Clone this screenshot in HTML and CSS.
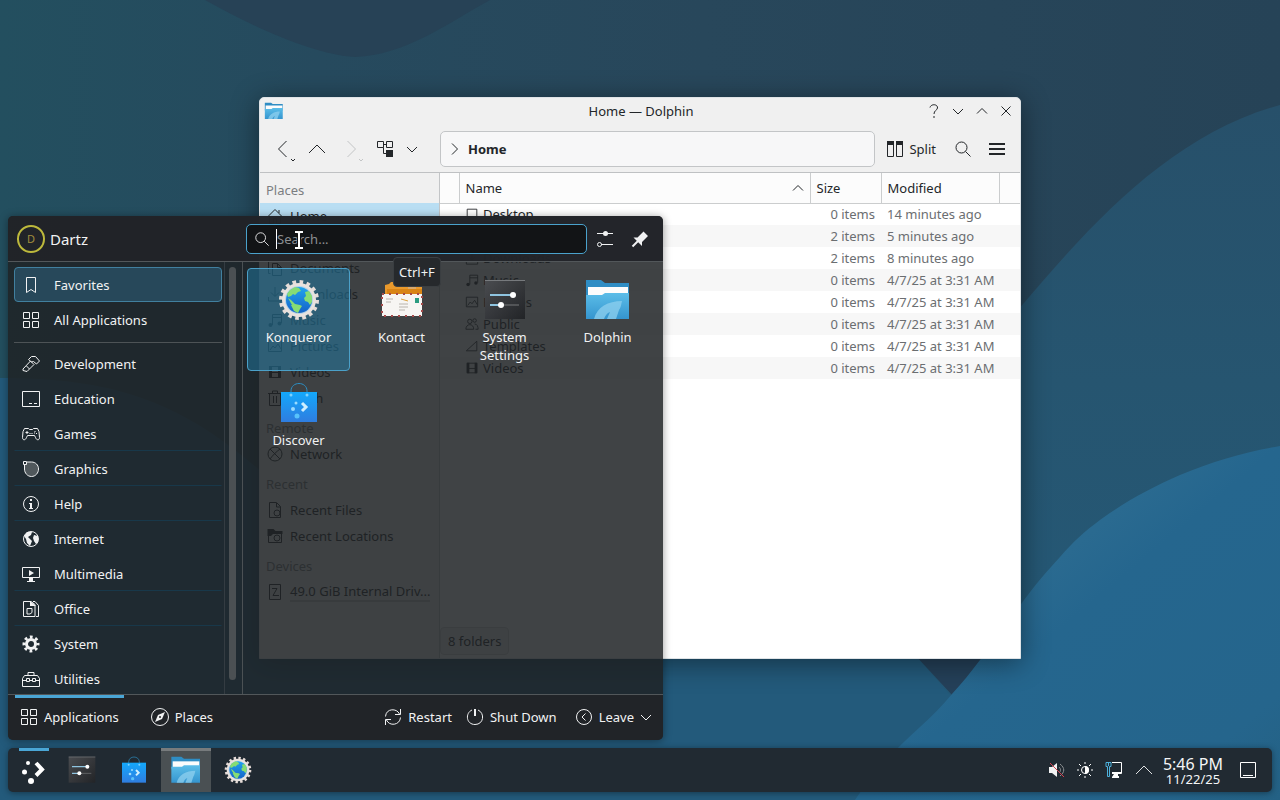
FILE: index.html
```html
<!DOCTYPE html>
<html lang="en">
<head>
<meta charset="utf-8">
<title>Desktop</title>
<link rel="stylesheet" href="styles.css">
</head>
<body>
<svg class="defs" width="0" height="0" aria-hidden="true">
  <defs>
    <linearGradient id="gFolder" x1="0" y1="0" x2="0" y2="1"><stop offset="0" stop-color="#5bbde8"/><stop offset="1" stop-color="#3595cf"/></linearGradient>
    <linearGradient id="gBag" x1="0" y1="0" x2="0" y2="1"><stop offset="0" stop-color="#13a8fb"/><stop offset="1" stop-color="#2f7de0"/></linearGradient>
    <linearGradient id="gDark" x1="0" y1="0" x2="1" y2="1"><stop offset="0" stop-color="#4a4c50"/><stop offset="1" stop-color="#222427"/></linearGradient>
    <linearGradient id="gGlobe" x1="0" y1="0" x2="0" y2="1"><stop offset="0" stop-color="#21a3ee"/><stop offset="1" stop-color="#1563c8"/></linearGradient>
  </defs>
  <symbol id="konqueror" viewBox="0 0 48 48">
    <circle cx="24" cy="24" r="18" fill="none" stroke="#e6dcd8" stroke-width="4" stroke-dasharray="3.6 3.47"/>
    <circle cx="24" cy="24" r="17" fill="#e9e2de"/>
    <circle cx="24" cy="24" r="14" fill="#b4d3e8"/>
    <circle cx="24" cy="24" r="13" fill="url(#gGlobe)"/>
    <path d="M12 18l3-4 5-3 4 1 2 3-3 1-3 3-2-1-2 2-3 1zM30 16l4-1 3 5v6l-2 3-2-3-3-1-1-3 2-2zM16 29l4-1 5 1 2 1-2 3-2 4-4-2zM13 22l3 2 4 4-3 1z" fill="#86dc74"/>
  </symbol>
  <symbol id="kontact" viewBox="0 0 48 48">
    <path d="M7 21V9l4-1 2-2h5l2 2h24v13z" fill="#e9992c"/>
    <path d="M30 8h8v9h-8z" fill="#d9a86b"/>
    <path d="M9 13h35v8H9z" fill="#d98415"/>
    <path d="M4 18h40v22H4z" fill="#f7f5f3"/>
    <path d="M4 18h40v22H4z" fill="none" stroke="#a54a4a" stroke-width="2" stroke-dasharray="2 5"/>
    <path d="M37 22h4v5h-4z" fill="#2b9c81"/>
    <path d="M8 23h7M8 26h5M21 28h9M21 31h9M21 34h6" stroke="#b9b4ae"/>
    <path d="M23 23l7 2" stroke="#dda23f"/>
  </symbol>
  <symbol id="settings" viewBox="0 0 48 48">
    <path d="M4 4h40v39H4z" fill="url(#gDark)"/>
    <path d="M4 4h40v1H4z" fill="#777a7d"/>
    <path d="M9 19h24M9 29h11" stroke="#8fc4e0" stroke-width="2"/>
    <path d="M22 29h16" stroke="#77787a" stroke-width="1"/>
    <circle cx="32" cy="19" r="3" fill="#fff"/><circle cx="20" cy="29" r="3" fill="#fff"/>
  </symbol>
  <symbol id="dolphin" viewBox="0 0 48 48">
    <path d="M2 4h15l4 3h24v16H2z" fill="#2f8dc4"/>
    <path d="M4 11h40v12H4z" fill="#fcfcfc"/>
    <path d="M2 19h16l3-2h24v26H2z" fill="url(#gFolder)"/>
    <path d="M10 43c3-12 14-18 28-18-1 4-1 6-3 9l-3 9h-9l3-7c-3 1-5 4-6 7z" fill="#8fd0ef" opacity=".75"/>
  </symbol>
  <symbol id="discover" viewBox="0 0 48 48">
    <path d="M16 17v-5c0-10 16-10 16 0v5" fill="none" stroke="#2c8fc4" stroke-width="1"/>
    <path d="M6 13h36v30H6z" fill="url(#gBag)"/>
    <circle cx="16" cy="16" r="1.500" fill="#7fd0fb"/><circle cx="32" cy="16" r="1.500" fill="#7fd0fb"/>
    <path d="M27 24l4 4-4 4" fill="none" stroke="#cfefff" stroke-width="3"/>
    <circle cx="21" cy="24" r="1.500" fill="#9bdcff"/><circle cx="18" cy="30" r="2" fill="#9bdcff"/><circle cx="22" cy="37" r="2.500" fill="#58c3fb"/>
  </symbol>
  <symbol id="grid" viewBox="0 0 18 18"><path d="M1.500 1.500h6v6h-6zM10.500 1.500h6v6h-6zM1.500 10.500h6v6h-6zM10.500 10.500h6v6h-6z" fill="none" stroke="currentColor"/></symbol>
  <symbol id="search" viewBox="0 0 18 18"><circle cx="7.500" cy="7.500" r="5.500" fill="none" stroke="currentColor"/><path d="M11.500 11.500l5 5" stroke="currentColor"/></symbol>
  <symbol id="down" viewBox="0 0 12 12"><path d="M1 4l5 5 5-5" fill="none" stroke="currentColor"/></symbol>
  <symbol id="up" viewBox="0 0 12 12"><path d="M1 8.500L6 3.500l5 5" fill="none" stroke="currentColor"/></symbol>
  <symbol id="house" viewBox="0 0 16 16"><path d="M.5 9L8 1.500 15.500 9M2.500 8v7.500h4v-5h3v5h4V8M12 5V2" fill="none" stroke="currentColor"/></symbol>
  <symbol id="desk" viewBox="0 0 16 16"><path d="M2.500 2.500h11v11h-11zM2.500 11.500h11" fill="none" stroke="currentColor"/></symbol>
  <symbol id="doc" viewBox="0 0 16 16"><path d="M5.500 3.500h5l4 4v8h-9zM10.500 3.500v4h4M3.500 13.500h-2v-12h7" fill="none" stroke="currentColor"/></symbol>
  <symbol id="dl" viewBox="0 0 16 16"><path d="M8 1v9M4 6.500l4 4 4-4M1.500 11v4h13v-4" fill="none" stroke="currentColor"/></symbol>
  <symbol id="note" viewBox="0 0 16 16"><path d="M5.500 13V2.500h9V11M5.500 5.500h9" fill="none" stroke="currentColor"/><circle cx="3.500" cy="13" r="2" fill="currentColor"/><circle cx="12.500" cy="11.500" r="2" fill="currentColor"/></symbol>
  <symbol id="pic" viewBox="0 0 16 16"><path d="M1.500 2.500h13v11h-13zM3 12l3-4 2 2 3-4 3 5" fill="none" stroke="currentColor"/></symbol>
  <symbol id="people" viewBox="0 0 16 16"><path d="M1 14c0-7 9-7 9 0zM11 8c3 0 4 3 4 6h-3" fill="none" stroke="currentColor"/><circle cx="5.500" cy="5" r="2.500" fill="none" stroke="currentColor"/><circle cx="11" cy="4" r="2" fill="none" stroke="currentColor"/></symbol>
  <symbol id="tri" viewBox="0 0 16 16"><path d="M1.500 13.500l12-11v11z" fill="none" stroke="currentColor"/></symbol>
  <symbol id="film" viewBox="0 0 16 16"><path d="M2 2h3v12H2zM11 2h3v12h-3z" fill="currentColor"/><path d="M2.500 2.500h11v11h-11zM4.500 8.500h7" fill="none" stroke="currentColor"/></symbol>
  <symbol id="trash" viewBox="0 0 16 16"><path d="M1 3.500h14M2.500 4v11.500h11V4M6.500 6v7M9.500 6v7M5.500 3V1h5v2" fill="none" stroke="currentColor"/></symbol>
  <symbol id="net" viewBox="0 0 16 16"><circle cx="8" cy="8" r="7" fill="none" stroke="currentColor"/><path d="M3 3c3 3 7 7 10 10M13 3C9 6 6 9 3 13" fill="none" stroke="currentColor"/></symbol>
  <symbol id="recent" viewBox="0 0 16 16"><path d="M2.500 15.500V.5h7l4 4v11zM9.500 1v4h4" fill="none" stroke="currentColor"/><circle cx="10" cy="11" r="3" fill="none" stroke="currentColor"/></symbol>
  <symbol id="recdir" viewBox="0 0 16 16"><path d="M.5 1h6l2 2h7v3H6L4 8H.500z" fill="currentColor"/><path d="M1.500 3v11.500h13V4" fill="none" stroke="currentColor"/><circle cx="10" cy="10" r="3" fill="none" stroke="currentColor"/></symbol>
  <symbol id="drive" viewBox="0 0 16 16"><path d="M2.500.5h11v15h-11zM5 4.500h5L6 11.500h6" fill="none" stroke="currentColor"/></symbol>
</svg>

<main class="desktop">
  <svg class="wallpaper" viewBox="0 0 1280 800" preserveAspectRatio="none" aria-hidden="true">
    <defs>
      <linearGradient id="w0" x1="0" y1="0" x2="1" y2="0"><stop offset="0" stop-color="#234f5f"/><stop offset=".25" stop-color="#264a5e"/><stop offset=".55" stop-color="#28475b"/><stop offset="1" stop-color="#264357"/></linearGradient>
      <linearGradient id="w1" x1="0" y1="0" x2="0" y2="1"><stop offset="0" stop-color="#27506a"/><stop offset=".4" stop-color="#265570"/><stop offset="1" stop-color="#245a79"/></linearGradient>
      <linearGradient id="w2" x1="0" y1="0" x2="1" y2="1"><stop offset="0" stop-color="#2a6a90"/><stop offset=".4" stop-color="#2a6a90"/><stop offset=".5" stop-color="#25668e"/><stop offset=".85" stop-color="#25658c"/><stop offset="1" stop-color="#246184"/></linearGradient>
    </defs>
    <path d="M0 0h1280v800H0z" fill="url(#w0)"/>
    <path d="M205 0c50 28 110 55 150 57 50-2 90-32 135-57z" fill="#274256"/>
    <path d="M1280 105c-110 30-190 120-262 205L860 560l60 240h360z" fill="url(#w1)"/>
    <path d="M0 378c130 0 200 30 300 130s400 140 620 152l120 140H0z" fill="#235a7b"/>
    <path d="M915 655h90l-53 40z" fill="#25415a"/>
    <path d="M1280 446c-35 6-67 15-100 29-30 13-55 27-80 45-15 11-27 22-40 37-13 14-24 27-36 43-15 21-29 42-44 60-9 12-18 23-28 34-10 12-20 22-32 33-24 22-45 43-65 73h425z" fill="url(#w2)"/>
  </svg>

  <section class="window" aria-label="Home — Dolphin">
    <header class="titlebar">
      <svg class="i20"><use href="#dolphin"/></svg>
      <h1>Home — Dolphin</h1>
      <div class="winbtns">
        <button aria-label="Help"><svg class="i14" viewBox="0 0 14 14"><path d="M3 3.500C4-.5 11 0 10.500 4 10 6.500 7 6.500 7 10M7 12v2" fill="none" stroke="currentColor"/></svg></button>
        <button aria-label="Minimize"><svg class="i12"><use href="#down"/></svg></button>
        <button aria-label="Maximize"><svg class="i12"><use href="#up"/></svg></button>
        <button aria-label="Close"><svg class="i12" viewBox="0 0 12 12"><path d="M1.500 1.500l9 9M10.500 1.500l-9 9" stroke="currentColor"/></svg></button>
      </div>
    </header>
    <nav class="toolbar">
      <button aria-label="Back"><svg class="i24" viewBox="0 0 24 24"><path d="M15.500 4l-8 8 8 8" fill="none" stroke="currentColor"/><path d="M20 22l2 2 2-2" fill="none" stroke="currentColor"/></svg></button>
      <button aria-label="Up"><svg class="i24" viewBox="0 0 24 24"><path d="M4 16l8-8 8 8" fill="none" stroke="currentColor"/></svg></button>
      <button aria-label="Forward" disabled><svg class="i24" viewBox="0 0 24 24"><path d="M8.500 4l8 8-8 8" fill="none" stroke="currentColor"/><path d="M20 22l2 2 2-2" fill="none" stroke="currentColor"/></svg></button>
      <button aria-label="View mode"><svg class="i18" viewBox="0 0 18 18"><path d="M1.500 1.500h6v6h-6zM10.500 1.500h6v6h-6zM7 4.500h3M7.500 7.500v6h3" fill="none" stroke="currentColor"/><path d="M10 10h7v7h-7z" fill="currentColor"/></svg></button>
      <button class="narrow" aria-label="View options"><svg class="i12"><use href="#down"/></svg></button>
      <div class="location"><svg class="i14" viewBox="0 0 14 14"><path d="M4 1.500L9.500 7 4 12.500" fill="none" stroke="currentColor"/></svg><a href="#home">Home</a></div>
      <button class="split"><svg class="i18" viewBox="0 0 18 18"><path d="M1.500 1.500h6v15h-6zM10.500 1.500h6v15h-6z" fill="none" stroke="currentColor"/><path d="M1 1h7v4H1zM10 1h7v4h-7z" fill="currentColor"/></svg>Split</button>
      <button aria-label="Search"><svg class="i18"><use href="#search"/></svg></button>
      <button aria-label="Menu"><svg class="i18" viewBox="0 0 18 18"><path d="M1 4h16M1 9h16M1 14h16" stroke="currentColor" stroke-width="2"/></svg></button>
    </nav>
    <div class="content">
      <aside class="places">
        <h2>Places</h2>
        <ul>
          <li class="on"><svg class="i16"><use href="#house"/></svg>Home</li>
          <li><svg class="i16"><use href="#desk"/></svg>Desktop</li>
          <li><svg class="i16"><use href="#doc"/></svg>Documents</li>
          <li><svg class="i16"><use href="#dl"/></svg>Downloads</li>
          <li><svg class="i16"><use href="#note"/></svg>Music</li>
          <li><svg class="i16"><use href="#pic"/></svg>Pictures</li>
          <li><svg class="i16"><use href="#film"/></svg>Videos</li>
          <li><svg class="i16"><use href="#trash"/></svg>Trash</li>
        </ul>
        <h2>Remote</h2>
        <ul><li><svg class="i16"><use href="#net"/></svg>Network</li></ul>
        <h2>Recent</h2>
        <ul>
          <li><svg class="i16"><use href="#recent"/></svg>Recent Files</li>
          <li><svg class="i16"><use href="#recdir"/></svg>Recent Locations</li>
        </ul>
        <h2>Devices</h2>
        <ul><li><svg class="i16"><use href="#drive"/></svg><span class="drive">49.0 GiB Internal Driv...</span></li></ul>
      </aside>
      <div class="files">
        <table>
          <colgroup><col class="c0"><col><col class="c2"><col class="c3"><col class="c4"></colgroup>
          <thead><tr><th></th><th><span class="sort">Name<svg class="i12"><use href="#up"/></svg></span></th><th>Size</th><th>Modified</th><th></th></tr></thead>
          <tbody>
            <tr><td></td><td><span class="file"><svg class="i14"><use href="#desk"/></svg>Desktop</span></td><td>0 items</td><td>14 minutes ago</td><td></td></tr>
            <tr><td></td><td><span class="file"><svg class="i14"><use href="#doc"/></svg>Documents</span></td><td>2 items</td><td>5 minutes ago</td><td></td></tr>
            <tr><td></td><td><span class="file"><svg class="i14"><use href="#dl"/></svg>Downloads</span></td><td>2 items</td><td>8 minutes ago</td><td></td></tr>
            <tr><td></td><td><span class="file"><svg class="i14"><use href="#note"/></svg>Music</span></td><td>0 items</td><td>4/7/25 at 3:31 AM</td><td></td></tr>
            <tr><td></td><td><span class="file"><svg class="i14"><use href="#pic"/></svg>Pictures</span></td><td>0 items</td><td>4/7/25 at 3:31 AM</td><td></td></tr>
            <tr><td></td><td><span class="file"><svg class="i14"><use href="#people"/></svg>Public</span></td><td>0 items</td><td>4/7/25 at 3:31 AM</td><td></td></tr>
            <tr><td></td><td><span class="file"><svg class="i14"><use href="#tri"/></svg>Templates</span></td><td>0 items</td><td>4/7/25 at 3:31 AM</td><td></td></tr>
            <tr><td></td><td><span class="file"><svg class="i14"><use href="#film"/></svg>Videos</span></td><td>0 items</td><td>4/7/25 at 3:31 AM</td><td></td></tr>
          </tbody>
        </table>
        <p class="status">8 folders</p>
      </div>
    </div>
  </section>

  <section class="launcher" aria-label="Application launcher">
    <header class="lhead">
      <div class="user"><span class="avatar">D</span>Dartz</div>
      <div class="lsearch">
        <label class="field"><svg class="i16"><use href="#search"/></svg><input type="text" placeholder="Search..." aria-label="Search"></label>
        <button aria-label="Configure"><svg class="i18" viewBox="0 0 18 18"><path d="M1 3.500h16M5 14.500h12" stroke="currentColor"/><circle cx="9.500" cy="3.500" r="2.500" fill="currentColor"/><circle cx="3.500" cy="14.500" r="2" fill="none" stroke="currentColor"/></svg></button>
        <button aria-label="Keep open"><svg class="i18" viewBox="0 0 18 18"><path d="M12.500 1.500l4.500 4.500-6 6v4L2.500 7.500h4z" fill="currentColor"/><path d="M7 11l-5.500 5.500" stroke="currentColor" stroke-width="2"/></svg></button>
      </div>
    </header>
    <div class="lbody">
      <nav class="cats">
        <button class="on"><svg class="i18" viewBox="0 0 18 18"><path d="M4.500 1.500h9v15l-4.500-3-4.500 3z" fill="none" stroke="currentColor"/></svg>Favorites</button>
        <button><svg class="i18"><use href="#grid"/></svg>All Applications</button>
        <hr>
        <button><svg class="i18" viewBox="0 0 18 18"><path d="M6.500 4.500l3-3h4l4 4.500-3 3-3-2.500-2 .5zM8.500 6l3.500 3.500-7 7-4-1V14z" fill="none" stroke="currentColor"/><path d="M4.500 11l3 3" stroke="currentColor"/></svg>Development</button>
        <button><svg class="i18" viewBox="0 0 18 18"><path d="M.5 1.500h17v15H.500zM7 13.500h3M12 13.500h3M3 3v0" fill="none" stroke="currentColor"/></svg>Education</button>
        <button class="line"><svg class="i18" viewBox="0 0 18 18"><path d="M2.500 3.500h4l1 1h3l1-1h4l1.500 3 .5 6c0 3-3 3-4 0l-1-2h-7l-1 2c-1 3-4 3-4 0L1 6.500z" fill="none" stroke="currentColor"/><path d="M3.500 7.500h3M5 6v3M7.500 8.500h1M9.500 8.500h1M13 6v1M12 8h1M14 8.500h1" stroke="currentColor"/></svg>Games</button>
        <button class="line"><svg class="i18" viewBox="0 0 18 18"><path d="M2.500 5v4c0 4 3 7.500 7 7.500s7-3.500 7-7.500-3-7-7-7H5" fill="#50585c" stroke="currentColor"/><path d="M1.500 1.500h3v3h-3z" fill="none" stroke="currentColor"/></svg>Graphics</button>
        <button class="line"><svg class="i18" viewBox="0 0 18 18"><circle cx="9" cy="9" r="7.500" fill="none" stroke="currentColor"/><path d="M7 8h3v5h1v1H7v-1h1V9H7zM8 4h2v2H8z" fill="currentColor"/></svg>Help</button>
        <button><svg class="i18" viewBox="0 0 18 18"><circle cx="9" cy="9" r="7.500" fill="none" stroke="currentColor"/><path d="M2 6l3-4h5L9 5 6 7l2 2 2 2-2 5-3-3-1-4zM12 5l4 1v6l-2 2-2-3-1-3z" fill="currentColor"/></svg>Internet</button>
        <button class="line"><svg class="i18" viewBox="0 0 18 18"><path d="M.5 2.500h17v10H.500z" fill="none" stroke="currentColor"/><path d="M7 5l5 3-5 3zM7 13h4v3h2v1H5v-1h2z" fill="currentColor"/></svg>Multimedia</button>
        <button class="line"><svg class="i18" viewBox="0 0 18 18"><path d="M8 16.500H1.500v-15H9l4 3v12H8M5 8.500h5v4L8 14H5zM11 1.500h2l3.500 4v11H14" fill="none" stroke="currentColor"/><path d="M8 1l6 5H8z" fill="currentColor"/></svg>Office</button>
        <button><svg class="i18" viewBox="0 0 18 18"><circle cx="9" cy="9" r="4.500" fill="none" stroke="currentColor" stroke-width="3"/><circle cx="9" cy="9" r="7" fill="none" stroke="currentColor" stroke-width="3" stroke-dasharray="2.750 2.750" stroke-dashoffset="1.375"/></svg>System</button>
        <button><svg class="i18" viewBox="0 0 18 18"><path d="M6 5.500v-3h6v3M.5 8.500l2-3h13l2 3v8H.500zM1 10.500h16" fill="none" stroke="currentColor"/><path d="M4.500 8.500h3v3h-3zM10.500 8.500h3v3h-3z" fill="#232c33" stroke="currentColor"/></svg>Utilities</button>
      </nav>
      <div class="scroll"><span></span></div>
      <div class="apps">
        <a class="on" href="#konqueror"><svg class="i48"><use href="#konqueror"/></svg>Konqueror</a>
        <a href="#kontact"><svg class="i48"><use href="#kontact"/></svg>Kontact</a>
        <a href="#settings"><svg class="i48"><use href="#settings"/></svg>System Settings</a>
        <a href="#dolphin"><svg class="i48"><use href="#dolphin"/></svg>Dolphin</a>
        <a href="#discover"><svg class="i48"><use href="#discover"/></svg>Discover</a>
      </div>
    </div>
    <footer class="lfoot">
      <button class="tab on"><svg class="i18"><use href="#grid"/></svg>Applications</button>
      <button class="tab"><svg class="i18" viewBox="0 0 18 18"><circle cx="9" cy="9" r="8.500" fill="none" stroke="currentColor"/><path d="M14 4l-3 7-7 3 3-7z" fill="currentColor"/><circle cx="9" cy="9" r="1" fill="#232629"/></svg>Places</button>
      <span class="space"></span>
      <button><svg class="i18" viewBox="0 0 18 18"><path d="M1.500 8.500C2 0 13 0 15.500 6M16.500 1v5.500H11M16.500 9.500c-.5 8-11.500 9-14 2.500M1.500 17v-5.500H7" fill="none" stroke="currentColor"/></svg>Restart</button>
      <button><svg class="i18" viewBox="0 0 18 18"><path d="M6 2C-1 5 0 16.500 9 16.500S19 5 12 2" fill="none" stroke="currentColor"/><path d="M9 1v7" stroke="currentColor" stroke-width="2"/></svg>Shut Down</button>
      <button class="leave"><svg class="i18" viewBox="0 0 18 18"><circle cx="9" cy="9" r="7.500" fill="none" stroke="currentColor"/><path d="M10.500 5.500L7 9l3.500 3.500" fill="none" stroke="currentColor"/></svg>Leave<svg class="i12"><use href="#down"/></svg></button>
    </footer>
    <div class="tooltip" role="tooltip">Ctrl+F</div>
    <svg class="pointer" viewBox="0 0 10 20" aria-hidden="true"><path d="M1 2h3l1 1 1-1h3M5 3v14M1 18h3l1-1 1 1h3" fill="none" stroke="#111" stroke-width="4"/><path d="M1 2h3l1 1 1-1h3M5 3v14M1 18h3l1-1 1 1h3" fill="none" stroke="#fff" stroke-width="2"/></svg>
  </section>

  <footer class="panel">
    <button class="start" aria-label="Launcher"><svg class="i28" viewBox="0 0 28 28"><path d="M17 7l6 6.500-6 6" fill="none" stroke="#fff" stroke-width="4"/><circle cx="9" cy="7" r="2" fill="#fff"/><circle cx="5.500" cy="16" r="2.500" fill="#fff"/><circle cx="12" cy="25" r="3" fill="#fff"/></svg></button>
    <button aria-label="System Settings"><svg class="i32"><use href="#settings"/></svg></button>
    <button aria-label="Discover"><svg class="i32"><use href="#discover"/></svg></button>
    <button class="active" aria-label="Dolphin"><svg class="i32"><use href="#dolphin"/></svg></button>
    <button aria-label="Konqueror"><svg class="i32"><use href="#konqueror"/></svg></button>
    <span class="space"></span>
    <div class="tray">
      <svg class="i16" viewBox="0 0 16 16"><path d="M0 5h3l5-4v14l-5-4H0z" fill="#f2f2f2"/><path d="M10 5c2 2 2 4 0 6M11 2c5 4 5 8 0 12" fill="none" stroke="#8b8f92"/><path d="M1 1l14 14" stroke="#d6404e"/></svg>
      <svg class="i16" viewBox="0 0 16 16"><circle cx="8" cy="8" r="3.500" fill="none" stroke="#fff"/><path d="M8 4a4 4 0 0 1 0 8z" fill="#fff"/><path d="M8 0v2M8 14v2M0 8h2M14 8h2M2 2l2 2M12 12l2 2M14 2l-2 2M4 12l-2 2" stroke="#fff"/></svg>
      <svg class="i18" viewBox="0 0 18 18"><path d="M7 1.500h9.500v11H7" fill="none" stroke="#fff"/><path d="M7 11h9v2h-3v2h1v2H7v-1l2-3H7z" fill="#fff"/><path d="M1 1.500h5v4H4.500v10h-2v-10H1zM3.500 1v4" fill="none" stroke="#4db1dc"/></svg>
      <svg class="i18" viewBox="0 0 18 18"><path d="M1 13l8-8 8 8" fill="none" stroke="#dfe1e2"/></svg>
    </div>
    <div class="clock"><time class="time">5:46 PM</time><time class="date">11/22/25</time></div>
    <button class="peek" aria-label="Show desktop"><svg class="i18" viewBox="0 0 18 18"><path d="M1.500 1.500h15v15h-15zM4 14.500h10" fill="none" stroke="#fff"/></svg></button>
  </footer>
</main>
</body>
</html>
```
FILE: styles.css
```css
* { box-sizing: border-box; }
body { margin: 0; font: 13px/18px "Noto Sans", sans-serif; color: #232629; }
h1, h2, p, ul { margin: 0; padding: 0; font-size: 13px; font-weight: 400; list-style: none; }
button { font: inherit; color: inherit; background: none; border: 0; padding: 0; display: flex; align-items: center; justify-content: center; }
a { color: inherit; text-decoration: none; }
svg { flex: none; display: block; }
.defs { position: absolute; }
.i12 { width: 12px; height: 12px; }
.i14 { width: 14px; height: 14px; }
.i16 { width: 16px; height: 16px; }
.i18 { width: 18px; height: 18px; }
.i20 { width: 20px; height: 20px; }
.i24 { width: 24px; height: 24px; overflow: visible; }
.i28 { width: 28px; height: 28px; }
.i32 { width: 32px; height: 32px; }
.i48 { width: 48px; height: 48px; }
.space { flex: 1; }

.desktop { position: relative; height: 100vh; overflow: hidden; display: flex; flex-direction: column; justify-content: flex-end; padding: 8px; background: #264a5e; }
.wallpaper { position: absolute; inset: 0; width: 100%; height: 100%; }

/* File manager window */
.window { position: absolute; inset: 97px 259px 141px; display: flex; flex-direction: column; background: #f0f0f0; border: 1px solid #dfe3e6; border-radius: 5px 5px 0 0; box-shadow: 0 4px 28px rgba(0, 0, 0, .45); overflow: hidden; }
.titlebar { display: grid; grid-template-columns: 1fr auto 1fr; align-items: center; height: 28px; padding: 0 2px 2px 4px; }
.winbtns { display: flex; justify-content: flex-end; }
.winbtns button { width: 24px; height: 24px; }
.toolbar { display: flex; align-items: center; height: 47px; padding: 0 6px; border-bottom: 1px solid #bfc1c3; }
.toolbar button { width: 34px; height: 34px; }
.toolbar button:disabled { color: #c3c5c6; }
.toolbar .narrow { width: 20px; }
.toolbar .split { width: auto; padding: 0 6px; gap: 5px; margin: 0 4px 0 5px; }
.location { flex: 1; display: flex; align-items: center; gap: 6px; height: 36px; margin-left: 18px; padding: 0 7px; background: #f7f7f8; border: 1px solid #c3c5c7; border-radius: 5px; font-weight: 700; }
.content { flex: 1; display: flex; min-height: 0; }
.places { width: 180px; border-right: 1px solid #c3c5c7; }
.places h2 { height: 30px; padding: 8px 6px 0; color: #7b7e81; }
.places li { display: flex; align-items: center; gap: 7px; height: 26px; padding: 0 7px; white-space: nowrap; }
.places .on { background: #b9def3; }
.drive { border-bottom: 2px solid #c5c8ca; }
.files { flex: 1; display: flex; flex-direction: column; justify-content: space-between; background: #fff; min-width: 0; }
table { width: 100%; table-layout: fixed; border-collapse: collapse; }
.c0 { width: 19px; }
.c2 { width: 71px; }
.c3 { width: 118px; }
.c4 { width: 21px; }
th { height: 30px; padding: 0 6px; text-align: left; font-weight: 400; border-right: 1px solid #cbcdce; border-bottom: 1px solid #cbcdce; background: #fcfcfc; }
th:last-child { border-right: 0; }
.sort { display: flex; align-items: center; justify-content: space-between; }
td { height: 22px; padding: 0 6px; color: #6b6e71; white-space: nowrap; }
td:nth-child(3) { text-align: right; }
tbody tr:nth-child(even) { background: #f7f7f7; }
.file { display: flex; align-items: center; gap: 4px; color: #232629; }
.status { align-self: flex-start; margin-bottom: 3px; padding: 4px 7px; background: #eff0f1; border: 1px solid #d5d7d8; border-radius: 4px; }

/* Launcher popup */
.launcher { position: absolute; left: 8px; bottom: 60px; width: 655px; color: #f1f2f3; border-radius: 5px; box-shadow: 0 1px 8px rgba(0, 0, 0, .4); overflow: hidden; background: rgba(31, 34, 37, .85); }
.lhead { display: flex; align-items: center; height: 46px; background: rgba(33, 36, 40, .93); border-bottom: 1px solid #52575a; }
.user { width: 238px; display: flex; align-items: center; gap: 5px; padding-left: 9px; font-size: 15px; }
.avatar { width: 28px; height: 28px; border: 2px solid #bdb93c; border-radius: 50%; display: flex; align-items: center; justify-content: center; color: #a08d3d; font-size: 11px; }
.lsearch { flex: 1; display: flex; align-items: center; padding-right: 6px; }
.lsearch button { width: 35px; height: 32px; }
.field { flex: 1; display: flex; align-items: center; gap: 6px; height: 30px; padding: 0 7px; background: #121416; border: 1px solid #4aa2cc; border-radius: 5px; }
.field input { flex: 1; min-width: 0; height: 20px; font: inherit; color: #fff; background: none; border: 0; border-left: 1px solid #fff; padding: 0; outline: 0; }
.field input::placeholder { color: #8c8f92; opacity: 1; }
.lbody { display: flex; height: 432px; overflow: hidden; }
.cats { width: 217px; padding: 5px 2px 0 6px; border-right: 1px solid #343c42; }
.cats button { width: 100%; height: 35px; padding-left: 7px; gap: 14px; justify-content: flex-start; border: 1px solid transparent; }
.cats .line { border-bottom-color: #18384a; }
.cats .on { background: #27485a; border-color: #41809f; border-radius: 4px; }
.cats hr { height: 1px; margin: 5px 0 3px; border: 0; background: #4d5356; }
.scroll { width: 18px; padding: 5px 6px 14px 4px; border-right: 1px solid #4b5154; }
.scroll span { display: block; width: 7px; height: 100%; border-radius: 4px; background: #4b5053; }
.apps { flex: 1; display: grid; grid-template-columns: repeat(4, 103px); grid-auto-rows: 103px; padding: 6px 4px 0; }
.apps a { display: flex; flex-direction: column; align-items: center; gap: 4px; padding: 7px 20px 0; text-align: center; border: 1px solid transparent; }
.apps .on { background: rgba(32, 125, 170, .5); border-color: #4ba0c8; border-radius: 4px; }
.lfoot { display: flex; height: 46px; padding: 0 11px 0 7px; background: rgba(33, 36, 40, .93); border-top: 1px solid #52575a; }
.lfoot button { gap: 6px; padding: 0 5px 2px; margin-left: 4px; }
.lfoot .tab { margin: 0 22px 0 0; border-top: 3px solid transparent; border-bottom: 3px solid transparent; }
.lfoot .tab.on { border-top-color: #4aa6d6; }
.lfoot .leave { margin-left: 8px; padding-right: 0; }
.tooltip { position: absolute; left: 385px; top: 41px; padding: 5px; background: #26292c; border: 1px solid #3a3e41; border-radius: 4px; }
.pointer { position: absolute; left: 286px; top: 14px; width: 10px; height: 20px; }

/* Bottom panel */
.panel { position: relative; display: flex; align-items: stretch; gap: 2px; height: 44px; padding-right: 12px; background: #212a32; border-radius: 5px; color: #f5f6f7; box-shadow: 0 1px 6px rgba(0, 0, 0, .4); }
.panel button { width: 50px; }
.panel .start { width: 48px; margin-left: 1px; margin-right: -2px; background: linear-gradient(#4aa6d6, #4aa6d6) 10px 0 / 30px 3px no-repeat; }
.panel .active { background: #4a5053; border-top: 3px solid #777b7d; border-bottom: 3px solid transparent; }
.tray { display: flex; align-items: center; gap: 12px; padding-right: 8px; }
.clock { display: flex; flex-direction: column; align-items: center; justify-content: center; padding-top: 1px; }
.time { font-size: 16px; line-height: 17px; }
.date { font-size: 13px; line-height: 13px; }
.panel .peek { width: 24px; margin-left: 11px; }
```
